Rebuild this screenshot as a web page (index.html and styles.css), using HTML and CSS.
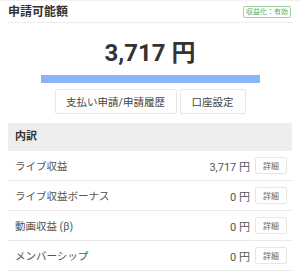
FILE: index.html
```html
<!DOCTYPE html>
<html lang="ja">
    <head>
        <meta charset="UTF-8">
        <meta name="viewport" content="width=device-width, initial-scale=1.0">
        <title>申請可能額</title>
        <link rel="stylesheet" href="styles.css">
    </head>
    <body>
        <div class="panel">
            <!-- 見出し -->
            <div class="panel-head">
                <h2>申請可能額</h2>
                <span class="badge">収益化：有効</span>
            </div>

            <div class="amount">3,717 円</div>
            <div class="bar"></div>

            <div class="actions">
                <button class="btn btn-wide">支払い申請/申請履歴</button>
                <button class="btn btn-narrow">口座設定</button>
            </div>

            <!-- 内訳 -->
            <div class="section-head">内訳</div>
            <div class="row">
                <span class="label">ライブ収益</span>
                <span class="value">3,717 円</span>
                <button class="detail">詳細</button>
            </div>
            <div class="row">
                <span class="label">ライブ収益ボーナス</span>
                <span class="value">0 円</span>
                <button class="detail">詳細</button>
            </div>
            <div class="row">
                <span class="label">動画収益 (β)</span>
                <span class="value">0 円</span>
                <button class="detail">詳細</button>
            </div>
            <div class="row">
                <span class="label">メンバーシップ</span>
                <span class="value">0 円</span>
                <button class="detail">詳細</button>
            </div>
        </div>
    </body>
</html>
```

FILE: styles.css
```css
/* Style global */
body, html {
    margin: 0;
    padding: 0;
    background-color: #ffffff;
    color: #333333;
    font-family: Roboto, 'Noto Sans CJK JP', sans-serif;
}

.panel {
    padding: 0 8px;
    border-top: 1px solid #f2f2f2;
}

/* Titre */
.panel-head {
    display: flex;
    align-items: center;
    justify-content: space-between;
    height: 21px;
    border-bottom: 1px solid #ededed;
}

.panel-head h2 {
    margin: 0;
    font-size: 12px;
    font-weight: 700;
    color: #333333;
    line-height: 1;
}

.badge {
    border: 1px solid #9fd39f;
    border-radius: 2px;
    color: #5aab5a;
    font-size: 7px;
    line-height: 8px;
    padding: 1px 2px;
    margin-right: 1px;
}

/* Montant */
.amount {
    margin-top: 14px;
    text-align: center;
    font-size: 24px;
    font-weight: 700;
    line-height: 32px;
    color: #333333;
}

.bar {
    width: 219px;
    height: 8px;
    margin: 6px auto 0;
    background-color: #8ab4f8;
}

/* Boutons */
.actions {
    display: flex;
    justify-content: center;
    gap: 3px;
    margin-top: 6px;
}

.btn {
    height: 25px;
    background-color: #ffffff;
    border: 1px solid #e6e6e6;
    border-radius: 2px;
    color: #444444;
    font-family: Roboto, 'Noto Sans CJK JP', sans-serif;
    font-size: 10.5px;
    padding: 0;
}

.btn-wide {
    width: 122px;
}

.btn-narrow {
    width: 66px;
}

/* Liste */
.section-head {
    margin-top: 9px;
    height: 28px;
    line-height: 28px;
    background-color: #eeeeee;
    padding-left: 7px;
    font-size: 11px;
    font-weight: 700;
    color: #333333;
}

.row {
    display: flex;
    align-items: center;
    height: 29px;
    padding: 0 5px 0 7px;
    border-bottom: 1px solid #e9e9e9;
    font-size: 10.5px;
    color: #555555;
}

.label {
    flex-grow: 1;
}

.value {
    margin-right: 5px;
    font-size: 11px;
}

.detail {
    width: 32px;
    height: 17px;
    padding: 0;
    background-color: #ffffff;
    border: 1px solid #e6e6e6;
    border-radius: 2px;
    color: #666666;
    font-family: Roboto, 'Noto Sans CJK JP', sans-serif;
    font-size: 8px;
}
```
